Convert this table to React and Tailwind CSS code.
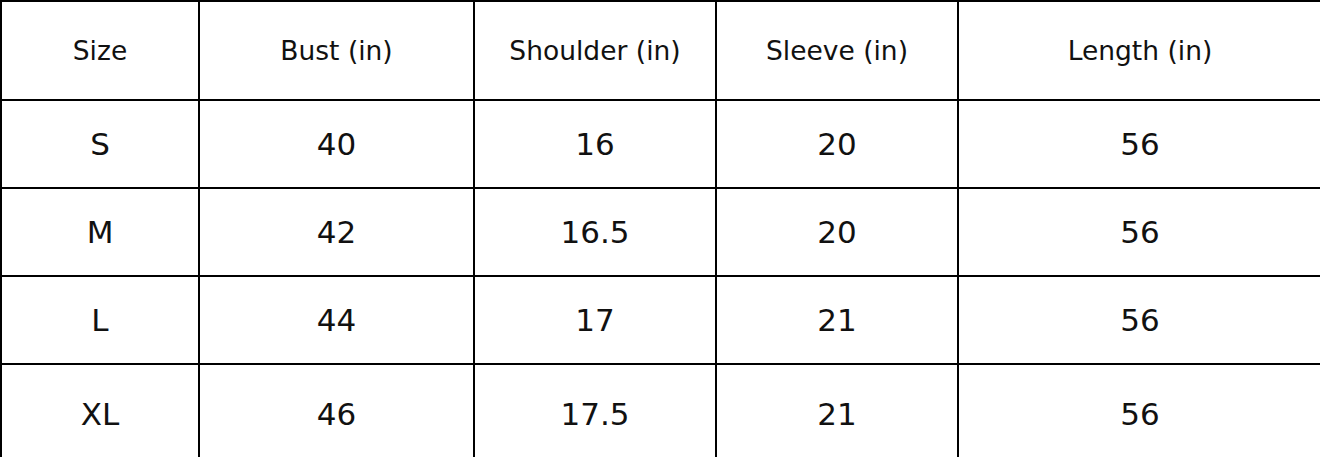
import React from "react";

const headers = ["Size", "Bust (in)", "Shoulder (in)", "Sleeve (in)", "Length (in)"];
const rows = [
  ["S", "40", "16", "20", "56"],
  ["M", "42", "16.5", "20", "56"],
  ["L", "44", "17", "21", "56"],
  ["XL", "46", "17.5", "21", "56"],
];
const rowH = ["h-[88px]", "h-[88px]", "h-[88px]", "h-[100px]"];

export default function App() {
  return (
    <div className="w-[1320px] h-[457px] overflow-hidden bg-white" style={{ fontFamily: '"DejaVu Sans", sans-serif' }}>
      <div className="w-[1324px] border-l-2 border-t-2 border-black grid grid-cols-[198px_275px_242px_242px_364px] text-[#111]">
        {headers.map((h) => (
          <div key={h} className="h-[99px] border-r-2 border-b-2 border-black flex items-center justify-center text-[26.5px]">
            {h}
          </div>
        ))}
        {rows.map((r, i) =>
          r.map((c, j) => (
            <div key={i + "-" + j} className={`${rowH[i]} border-r-2 border-b-2 border-black flex items-center justify-center text-[31px]`}>
              {c}
            </div>
          ))
        )}
      </div>
    </div>
  );
}
